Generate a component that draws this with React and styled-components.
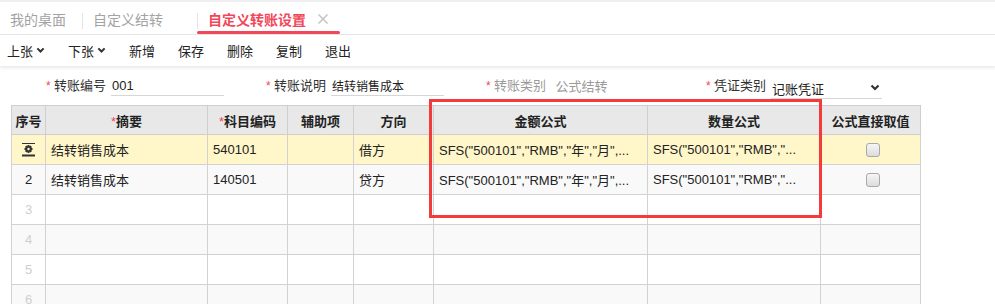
import React from 'react';
import styled, { createGlobalStyle } from 'styled-components';

const GlobalStyle = createGlobalStyle`
  html, body {
    margin: 0;
    padding: 0;
    background: #fff;
    font-family: "Liberation Sans", "Noto Sans CJK SC", sans-serif;
    color: #333;
  }
`;

const Page = styled.div`
  position: relative;
  width: 995px;
  height: 304px;
  overflow: hidden;
`;

/* tabs */
const TabBar = styled.div`
  display: flex;
  align-items: stretch;
  height: 32px;
  border-top: 2px solid #f0f0f0;
  border-bottom: 1px solid #e6e6e6;
`;

const Tab = styled.div`
  position: relative;
  display: flex;
  align-items: center;
  padding: 2px ${p => (p.home ? '16px' : '12px')} 0 ${p => (p.home ? '10px' : '11px')};
  font-size: 14px;
  color: ${p => (p.active ? '#f2475a' : '#a3a3a3')};
  font-weight: ${p => (p.active ? 'bold' : 'normal')};

  &::before {
    content: '';
    display: ${p => (p.home ? 'none' : 'block')};
    position: absolute;
    left: 0;
    top: 11px;
    height: 16px;
    width: 1px;
    background: #e3e3e3;
  }

  &::after {
    content: '';
    display: ${p => (p.active ? 'block' : 'none')};
    position: absolute;
    left: 0;
    right: 0;
    bottom: 0;
    height: 3px;
    border-radius: 2px;
    background: #f2475a;
  }
`;

const Close = styled.span`
  margin-left: 12px;
  width: 10px;
  height: 10px;
  display: flex;
  visibility: ${p => (p.show ? 'visible' : 'hidden')};
`;

/* toolbar */
const Toolbar = styled.div`
  display: flex;
  align-items: center;
  gap: 23px;
  height: 31px;
  padding-left: 7px;
  box-shadow: 0 2px 3px rgba(0, 0, 0, 0.09);
`;

const ToolItem = styled.span`
  display: flex;
  align-items: center;
  font-size: 13px;
  color: #222;
  svg {
    margin-left: 3px;
  }
`;

/* form */
const Form = styled.div`
  display: grid;
  grid-template-columns: repeat(4, 220px);
  padding: 10px 0 6px 46px;
`;

const Field = styled.div`
  display: flex;
  align-items: flex-start;
  font-size: 13px;
`;

const Star = styled.span`
  color: #f2475a;
  font-size: 12px;
  width: 8px;
  line-height: 20px;
`;

const Label = styled.span`
  width: 57px;
  line-height: 20px;
  color: ${p => (p.disabled ? '#9a9a9a' : '#333')};
`;

const Input = styled.div`
  display: flex;
  align-items: ${p => (p.h ? 'flex-end' : 'center')};
  justify-content: space-between;
  width: ${p => p.w}px;
  height: ${p => p.h || 19}px;
  box-sizing: content-box;
  padding-left: 1px;
  font-size: ${p => p.fs || 13}px;
  color: ${p => (p.disabled ? '#999' : '#222')};
  border-bottom: 1px solid ${p => (p.plain ? 'transparent' : '#d6d6d6')};
  svg {
    margin-right: 2px;
    align-self: center;
  }
`;

/* grid */
const Grid = styled.table`
  margin-left: 11px;
  border-collapse: collapse;
  table-layout: fixed;
  width: 909px;
  font-size: 13px;
`;

const Th = styled.th`
  height: 28px;
  padding: 0;
  background: #e8e8e8;
  border: 1px solid #cfcfcf;
  font-weight: bold;
  color: #222;
  text-align: center;
  white-space: nowrap;
`;

const Req = styled.span`
  color: #f2475a;
  font-weight: normal;
`;

const Tr = styled.tr`
  background: ${p => (p.current ? '#fff6c9' : p.odd ? '#fff' : '#f9f9f9')};
`;

const Td = styled.td`
  height: 29px;
  padding: 0 0 0 5px;
  border: 1px solid #d2d2d2;
  color: #222;
  white-space: nowrap;
  overflow: hidden;
  text-align: ${p => (p.center ? 'center' : 'left')};
`;

const RowNo = styled(Td)`
  padding: 0;
  text-align: center;
  color: ${p => (p.muted ? '#cfcfcf' : '#222')};
  svg {
    display: block;
    margin: 0 auto;
  }
`;

const Check = styled.span`
  display: inline-block;
  width: 12px;
  height: 12px;
  border: 1px solid #a9a9a9;
  border-radius: 3px;
  background: linear-gradient(#f6f6f6, #dcdcdc);
  vertical-align: middle;
`;

const Highlight = styled.div`
  position: absolute;
  left: 429px;
  top: 99px;
  width: 387px;
  height: 113px;
  border: 3px solid #f23b3b;
  pointer-events: none;
`;

const Chevron = ({ size = 9 }) => (
  <svg width={size} height={size * 0.7} viewBox="0 0 10 7">
    <polyline points="1.5,1.5 5,5 8.5,1.5" fill="none" stroke="#333" strokeWidth="2.2" />
  </svg>
);

const Cross = () => (
  <svg width="10" height="10" viewBox="0 0 10 10">
    <path d="M0.5 0.5 L9.5 9.5 M9.5 0.5 L0.5 9.5" stroke="#c4c4c4" strokeWidth="1.5" />
  </svg>
);

const Gear = () => (
  <svg width="15" height="14" viewBox="0 0 15 14">
    <line x1="1" y1="0.5" x2="14" y2="0.5" stroke="#333" strokeWidth="1" />
    <g transform="translate(7.5 6)" fill="#333">
      {[0, 45, 90, 135].map(a => (
        <rect key={a} x="-1" y="-4" width="2" height="8" transform={`rotate(${a})`} />
      ))}
      <circle r="3" />
      <circle r="1.2" fill="#fff6c9" />
    </g>
    <line x1="1" y1="12.5" x2="14" y2="12.5" stroke="#333" strokeWidth="2" />
  </svg>
);

const columns = [
  { w: 34, title: '序号' },
  { w: 162, title: '摘要', req: true },
  { w: 80, title: '科目编码', req: true },
  { w: 66, title: '辅助项' },
  { w: 80, title: '方向' },
  { w: 214, title: '金额公式' },
  { w: 173, title: '数量公式' },
  { w: 100, title: '公式直接取值' },
];

const rows = [
  { summary: '结转销售成本', code: '540101', dir: '借方', amount: 'SFS("500101","RMB","年","月",...', qty: 'SFS("500101","RMB","...' },
  { summary: '结转销售成本', code: '140501', dir: '贷方', amount: 'SFS("500101","RMB","年","月",...', qty: 'SFS("500101","RMB","...' },
  null,
  null,
  null,
  null,
];

export default function App() {
  return (
    <Page>
      <GlobalStyle />
      <TabBar>
        <Tab home>我的桌面</Tab>
        <Tab>
          自定义结转
          <Close><Cross /></Close>
        </Tab>
        <Tab active>
          自定义转账设置
          <Close show><Cross /></Close>
        </Tab>
      </TabBar>

      <Toolbar>
        <ToolItem>上张<Chevron /></ToolItem>
        <ToolItem>下张<Chevron /></ToolItem>
        <ToolItem>新增</ToolItem>
        <ToolItem>保存</ToolItem>
        <ToolItem>删除</ToolItem>
        <ToolItem>复制</ToolItem>
        <ToolItem>退出</ToolItem>
      </Toolbar>

      <Form>
        <Field>
          <Star>*</Star>
          <Label>转账编号</Label>
          <Input w={112}>001</Input>
        </Field>
        <Field>
          <Star>*</Star>
          <Label>转账说明</Label>
          <Input w={112} fs={12}>结转销售成本</Input>
        </Field>
        <Field>
          <Star>*</Star>
          <Label disabled>转账类别</Label>
          <Input w={112} plain disabled>&nbsp;公式结转</Input>
        </Field>
        <Field>
          <Star>*</Star>
          <Label>凭证类别</Label>
          <Input w={110} h={22}>
            记账凭证
            <Chevron size={10} />
          </Input>
        </Field>
      </Form>

      <Grid>
        <colgroup>
          {columns.map(c => <col key={c.title} style={{ width: c.w }} />)}
        </colgroup>
        <thead>
          <tr>
            {columns.map(c => (
              <Th key={c.title}>{c.req && <Req>*</Req>}{c.title}</Th>
            ))}
          </tr>
        </thead>
        <tbody>
          {rows.map((r, i) => (
            <Tr key={i} current={i === 0} odd={i % 2 === 0}>
              <RowNo muted={!r}>{i === 0 ? <Gear /> : i + 1}</RowNo>
              <Td>{r && r.summary}</Td>
              <Td>{r && r.code}</Td>
              <Td />
              <Td>{r && r.dir}</Td>
              <Td>{r && r.amount}</Td>
              <Td>{r && r.qty}</Td>
              <Td center>{r && <Check />}</Td>
            </Tr>
          ))}
        </tbody>
      </Grid>

      <Highlight />
    </Page>
  );
}
